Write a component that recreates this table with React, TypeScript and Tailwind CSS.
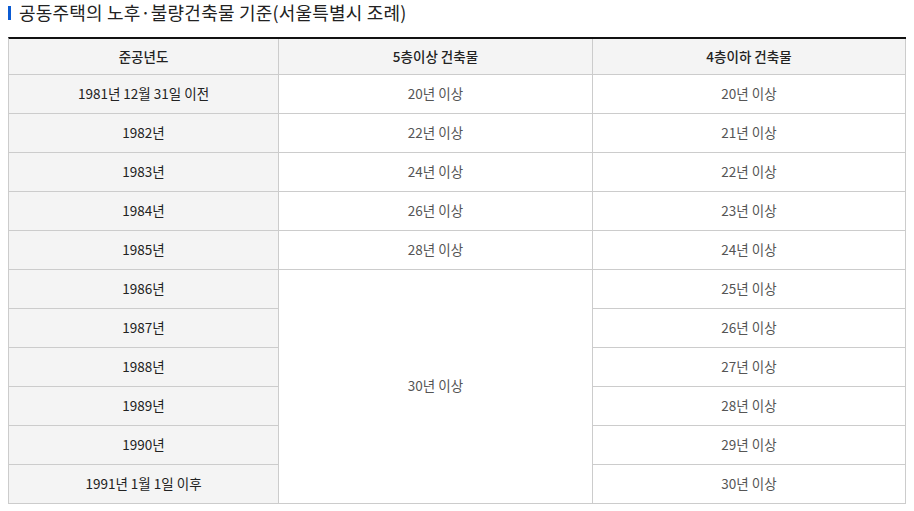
import React from "react";

const years = [
  "1981년 12월 31일 이전",
  "1982년",
  "1983년",
  "1984년",
  "1985년",
  "1986년",
  "1987년",
  "1988년",
  "1989년",
  "1990년",
  "1991년 1월 1일 이후",
];
const five = ["20년 이상", "22년 이상", "24년 이상", "26년 이상", "28년 이상"];
const four = [
  "20년 이상",
  "21년 이상",
  "22년 이상",
  "23년 이상",
  "24년 이상",
  "25년 이상",
  "26년 이상",
  "27년 이상",
  "28년 이상",
  "29년 이상",
  "30년 이상",
];

export default function App() {
  return (
    <div
      className="w-[914px] h-[511px] bg-white overflow-hidden"
      style={{ fontFamily: '"Noto Sans CJK KR", "Noto Sans", sans-serif' }}
    >
      <div className="flex items-center h-[26px] pl-[8px] pb-[1px]">
        <span className="w-[3px] h-[14px] bg-[#0b5bd3] mr-[8px]" />
        <h2 className="text-[18px] leading-[25px] text-[#222] font-normal tracking-[0.2px]">
          공동주택의 노후·불량건축물 기준(서울특별시 조례)
        </h2>
      </div>
      <div className="mt-[11px] ml-[8px] w-[898px] border-t-2 border-t-[#111] border-l border-l-[#cccccc] grid grid-cols-[270px_314px_313px] grid-rows-[36px_repeat(11,39px)] text-[13.5px]">
        <div className="bg-[#f4f4f4] border-r border-b border-[#cccccc] flex items-center justify-center pb-[1px] text-[#222] font-medium">
          준공년도
        </div>
        <div className="bg-[#f4f4f4] border-r border-b border-[#cccccc] flex items-center justify-center pb-[1px] text-[#222] font-medium">
          5층이상 건축물
        </div>
        <div className="bg-[#f4f4f4] border-r border-b border-[#cccccc] flex items-center justify-center pb-[1px] text-[#222] font-medium">
          4층이하 건축물
        </div>
        {years.map((y, i) => (
          <React.Fragment key={y}>
            <div
              className="bg-[#f4f4f4] border-r border-b border-[#cccccc] flex items-center justify-center pb-[2px] text-[#222]"
              style={{ gridColumn: 1, gridRow: i + 2 }}
            >
              {y}
            </div>
            {i < 5 ? (
              <div
                className="border-r border-b border-[#cccccc] flex items-center justify-center pb-[2px] text-[#555]"
                style={{ gridColumn: 2, gridRow: i + 2 }}
              >
                {five[i]}
              </div>
            ) : null}
            <div
              className="border-r border-b border-[#cccccc] flex items-center justify-center pb-[2px] text-[#555]"
              style={{ gridColumn: 3, gridRow: i + 2 }}
            >
              {four[i]}
            </div>
          </React.Fragment>
        ))}
        <div
          className="border-r border-b border-[#cccccc] flex items-center justify-center pb-[2px] text-[#555]"
          style={{ gridColumn: 2, gridRow: "7 / span 6" }}
        >
          30년 이상
        </div>
      </div>
    </div>
  );
}
